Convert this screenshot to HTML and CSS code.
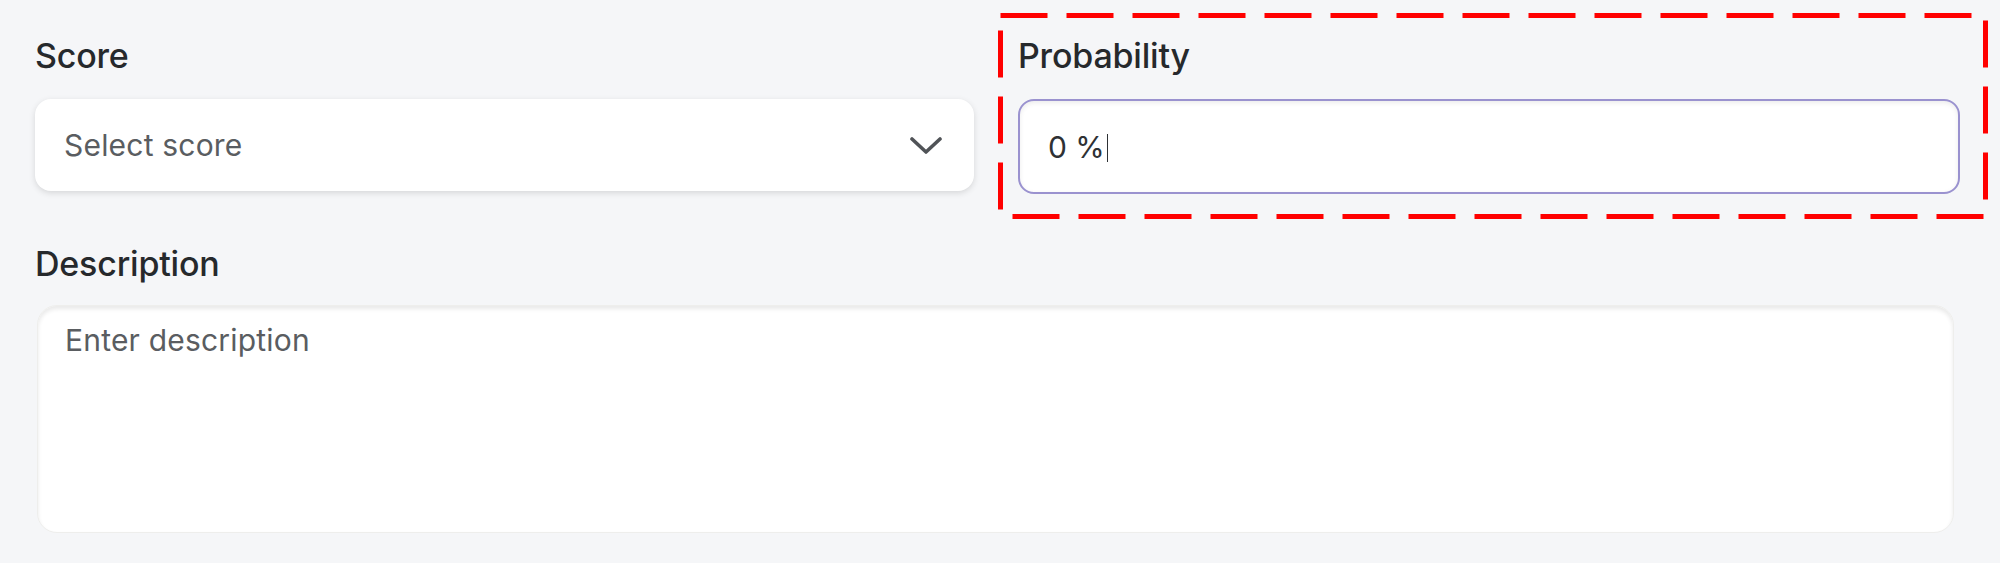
FILE: index.html
```html
<html>
<head>
<meta charset="UTF-8">
<title>Score and Probability</title>
<meta name="viewport" content="width=device-width,initial-scale=1">
<link rel="stylesheet" href="styles.css">
</head>
<body>
<div class="page">
	<div class="row">
		<div class="field">
			<div class="label">Score</div>
			<div class="select">
				<span class="placeholder">Select score</span>
				<svg class="chevron" width="32" height="18" viewBox="0 0 32 18">
					<path d="M2 2 L16 15 L30 2" fill="none" stroke="#505357" stroke-width="3.6" stroke-linecap="round" stroke-linejoin="round"/>
				</svg>
			</div>
		</div>
		<div class="field highlighted">
			<div class="label">Probability</div>
			<div class="input focused">
				<span class="value">0 %</span><span class="caret"></span>
			</div>
			<!-- annotation box round the field -->
			<svg class="marker" width="990" height="206" viewBox="0 0 990 206">
				<rect x="2.5" y="2.5" width="985" height="201" fill="none" stroke="#ff0000" stroke-width="5" stroke-dasharray="47 19"/>
			</svg>
		</div>
	</div>
	<div class="field">
		<div class="label">Description</div>
		<div class="textarea">
			<span class="placeholder">Enter description</span>
		</div>
	</div>
</div>
</body>
</html>
```
FILE: styles.css
```css
body{
	margin:0;
	background:#f5f6f8;
	font-family:Inter, "Liberation Sans", sans-serif;
	color:#26292c;
}

.page{
	padding:35px 40px 0 35px;
}

.row{
	display:grid;
	grid-template-columns:939px 942px;
	column-gap:44px;
	margin-bottom:49px;
}

.field{
	display:flex;
	flex-direction:column;
}

.highlighted{
	position:relative;
}

.label{
	font-size:34px;
	font-weight:500;
	line-height:41px;
	margin-bottom:23px;
	letter-spacing:-0.2px;
}

.placeholder{
	font-size:30px;
	letter-spacing:0.2px;
	color:#5a5d61;
	line-height:36px;
}

.select{
	height:92px;
	background:white;
	border-radius:16px;
	box-shadow:0 2px 6px rgba(0, 0, 0, 0.13);
	display:flex;
	align-items:center;
	justify-content:space-between;
	padding:0 32px 0 29px;
}

.chevron{
	margin-top:2px;
}

.input{
	height:91px;
	background:white;
	border:2px solid #9a92cf;
	border-radius:16px;
	box-shadow:inset 0 2px 5px rgba(0, 0, 0, 0.08);
	display:flex;
	align-items:center;
	padding:0 28px;
}

.value{
	font-size:30px;
	color:#2e3134;
}

.caret{
	display:inline-block;
	width:1.5px;
	height:28px;
	background:#2e3134;
	margin-left:2px;
	margin-top:2px;
}

.marker{
	position:absolute;
	left:-20px;
	top:-22px;
}

.textarea{
	margin:-2px 6px 0 2px;
	height:228px;
	background:white;
	border-radius:20px;
	border:1px solid #eeeeec;
	box-shadow:inset 0 3px 4px rgba(0, 0, 0, 0.09);
	padding:16px 27px;
	box-sizing:border-box;
}
```
